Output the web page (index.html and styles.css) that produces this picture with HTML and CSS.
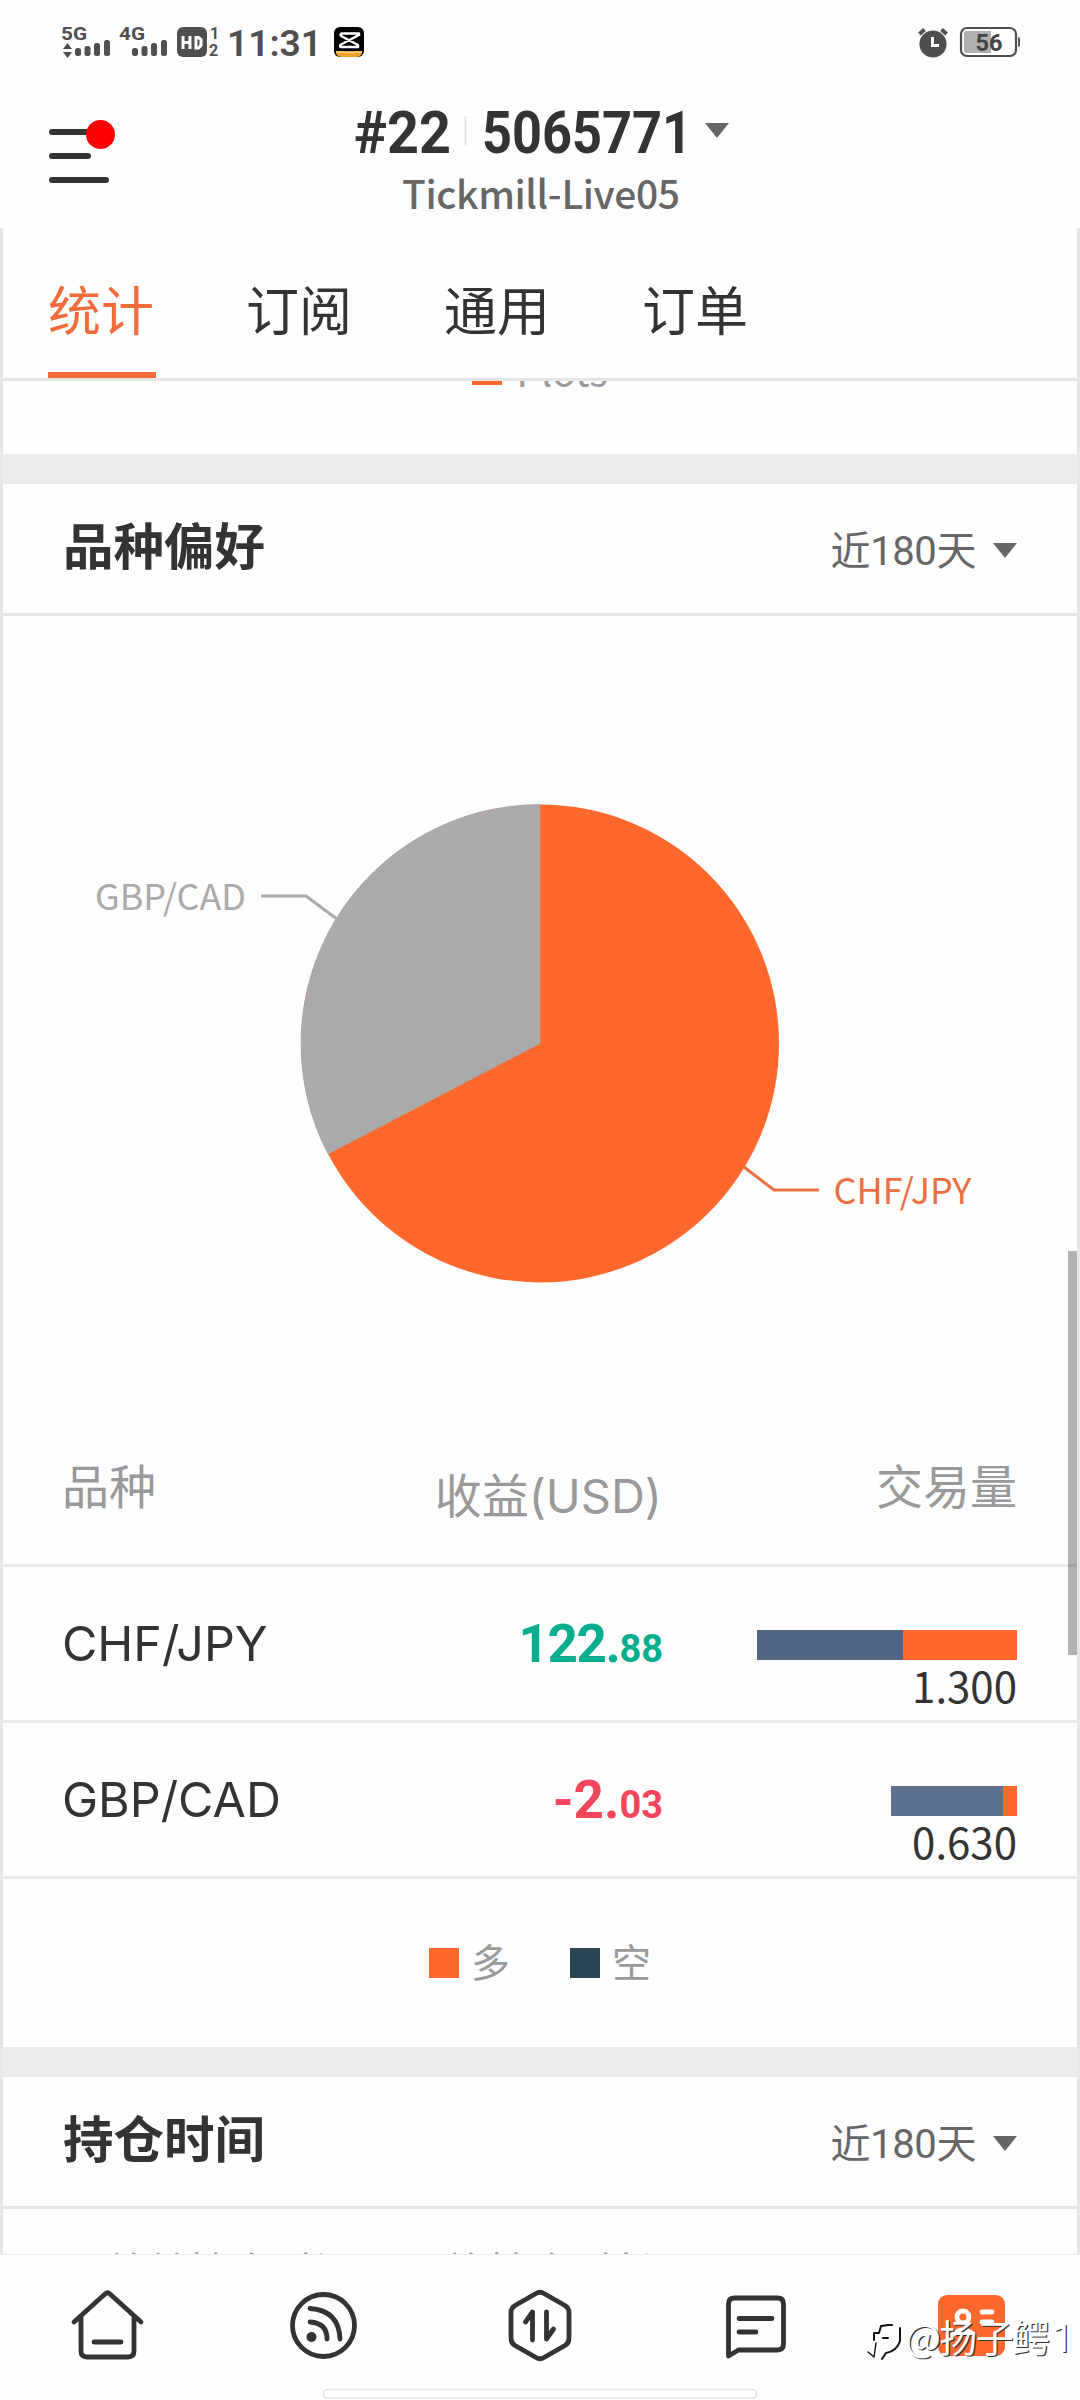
FILE: index.html
```html
<!DOCTYPE html>
<html lang="zh-CN">
<head>
<meta charset="utf-8">
<title>统计</title>
<link rel="stylesheet" href="styles.css">
</head>
<body>
<div class="app">
  <header class="top">
    <svg class="top-art" width="1080" height="228" viewBox="0 0 1080 228">
      <g fill="#4f4f4f">
        <text class="sig" x="61" y="40" textLength="26" lengthAdjust="spacingAndGlyphs">5G</text>
        <text class="sig" x="119" y="40" textLength="26" lengthAdjust="spacingAndGlyphs">4G</text>
        <path d="M63 49l4.500-6 4.500 6zM63 52h9l-4.500 6z"/>
        <rect x="75" y="48" width="6" height="8" rx="2.500"/><rect x="84.500" y="46" width="6" height="10" rx="2.500"/><rect x="94" y="43" width="6" height="13" rx="2.500"/><rect x="104" y="40" width="6" height="16" rx="2.500"/>
        <rect x="132" y="48" width="6" height="8" rx="2.500"/><rect x="141.500" y="46" width="6" height="10" rx="2.500"/><rect x="151" y="43" width="6" height="13" rx="2.500"/><rect x="161" y="40" width="6" height="16" rx="2.500"/>
        <rect x="177" y="27" width="30" height="30" rx="6"/>
        <text class="mini" x="210" y="38.500">1</text><text class="mini" x="209" y="56">2</text>
        <text class="clock" x="227" y="55.500" textLength="95" lengthAdjust="spacingAndGlyphs">11:31</text>
      </g>
      <path d="M183 36v13M190 36v13M183 42.500h7M196 37.500h2.500l2.500 2v6l-2.500 2.500h-2.500z" fill="none" stroke="#fff" stroke-width="3"/>
      <rect x="334" y="27" width="30" height="30" rx="6" fill="#000"/>
      <path d="M336 51h26v2q-1 4-6 4h-14q-5 0-6-4z" fill="#f0a32c"/>
      <path d="M336 51.500l3 1 3-1 3 1.500 4-1 4 1 3-1.500 3 1 3-1" fill="none" stroke="#ffe0a0" stroke-width="1"/>
      <path d="M359 36v-2.500h-17q-3 1 0 3l16 8.500v2h-17q-2-.5 0-2.500l17-9" fill="none" stroke="#fff" stroke-width="2.500" stroke-linejoin="round"/>
      <circle cx="933" cy="44" r="13.600" fill="#4f4f4f"/>
      <path d="M919.500 34l5-4.500M946.500 34l-5-4.500" stroke="#4f4f4f" stroke-width="4"/>
      <path d="M932.500 37v8.500h6.500" fill="none" stroke="#fff" stroke-width="3"/>
      <rect x="961" y="28" width="55" height="28" rx="6" fill="#fff" stroke="#4f4f4f" stroke-width="2.200"/>
      <path d="M966 31h25v22h-25q-2 0-2-2v-18q0-2 2-2z" fill="#b0b0b0"/>
      <path d="M1018 37q2 0 2 2v6q0 2-2 2z" fill="#4f4f4f"/>
      <text class="batt" x="975.500" y="50.500" fill="#444" textLength="27" lengthAdjust="spacingAndGlyphs">56</text>
      <path d="M52 132h40M52 156h36M52 180h54" stroke="#333" stroke-width="6" stroke-linecap="round"/>
      <circle cx="100.500" cy="134.500" r="14.500" fill="#f00"/>
      <text class="acct" x="354" y="153" textLength="97" lengthAdjust="spacingAndGlyphs">#22</text>
      <path d="M465.500 116v29" stroke="#e4e4e4" stroke-width="2"/>
      <text class="acct" x="482" y="153" textLength="210" lengthAdjust="spacingAndGlyphs">5065771</text>
      <path d="M705 123h24l-12 15z" fill="#666"/>
      <text class="server" x="402" y="209" textLength="278">Tickmill-Live05</text>
    </svg>
  </header>

  <main class="body">
    <nav class="tabs">
      <span class="tab on">统计</span><span class="tab">订阅</span><span class="tab">通用</span><span class="tab">订单</span>
    </nav>
    <section class="prev">
      <div class="prev-legend"><i class="sw long"></i><span>Plots</span></div>
    </section>

    <section class="card">
      <div class="head"><h2>品种偏好</h2><span class="range">近180天<i class="caret"></i></span></div>
      <svg class="pie" width="1074" height="768" viewBox="3 616 1074 768">
        <circle cx="540" cy="1043.500" r="239" fill="#ff682d"/>
        <path d="M540 1043.500V804.500A239 239 0 0 0 328 1153.900z" fill="#aaa" stroke="#aaa" stroke-width=".6"/>
        <path d="M261 896h45l31 23" fill="none" stroke="#aaa" stroke-width="3"/>
        <path d="M744 1167l30 23h45" fill="none" stroke="#ec6f42" stroke-width="3"/>
        <text class="plabel" x="95" y="909.500" fill="#aaa" textLength="151" lengthAdjust="spacingAndGlyphs">GBP/CAD</text>
        <text class="plabel" x="833.500" y="1204" fill="#ec6f42" textLength="138" lengthAdjust="spacingAndGlyphs">CHF/JPY</text>
      </svg>
      <div class="row cols"><span>品种</span><span class="mid">收益(USD)</span><span class="end">交易量</span></div>
      <div class="row">
        <span class="sym">CHF/JPY</span>
        <span class="pl up">122.<small>88</small></span>
        <span class="vol"><span class="bar"><i class="short" style="width:146px"></i><i class="long" style="width:114px"></i></span>1.300</span>
      </div>
      <div class="row">
        <span class="sym">GBP/CAD</span>
        <span class="pl down">-2.<small>03</small></span>
        <span class="vol"><span class="bar"><i class="short alt" style="width:112px"></i><i class="long" style="width:14px"></i></span>0.630</span>
      </div>
      <div class="legend"><i class="sw long"></i><span>多</span><i class="sw dark"></i><span>空</span></div>
    </section>

    <section class="card">
      <div class="head"><h2>持仓时间</h2><span class="range">近180天<i class="caret"></i></span></div>
      <div class="clip"><span>总单持仓时间</span><span>平均持仓时长</span></div>
    </section>
    <div class="scroll"></div>
  </main>

  <footer class="nav">
    <svg width="1080" height="145" viewBox="0 2255 1080 145" fill="none" stroke="#333" stroke-width="4.800" stroke-linecap="round" stroke-linejoin="round">
      <path d="M74 2322l31-28q2.500-2.500 5 0l31 28M81 2317v34q0 6 6 6h41q6 0 6-6v-34M94 2342h27"/>
      <circle cx="323.500" cy="2325.500" r="31"/>
      <circle cx="311.500" cy="2337" r="5" fill="#333" stroke="none"/>
      <path d="M310 2322q17 1 17 17M310 2308.500q29 2 30 30.500"/>
      <path d="M536 2293.500q4-2.500 8 0l21 12q4 2.500 4 7v26q0 4.500-4 7l-21 12q-4 2.500-8 0l-21-12q-4-2.500-4-7v-26q0-4.500 4-7z"/>
      <path d="M525.500 2322l7-10v28M546.500 2312v27l7-10"/>
      <path d="M728.500 2356v-52q0-6 6-6h43q6 0 6 6v40q0 6-6 6h-39zM739 2318.500h33M739 2332h17"/>
      <rect x="938" y="2295" width="67" height="61" rx="9" fill="#ff682d" stroke="none"/>
      <g stroke="#fff"><circle cx="963" cy="2317" r="6"/><path d="M982 2312h10M982 2322h10M952 2335q11-10 22 0"/></g>
      <rect x="323.500" y="2389.500" width="433" height="8.500" rx="4" fill="#fff" stroke="#e5e5e5" stroke-width="1.600"/>
      <g class="mark">
        <path d="M874 2340v-7h5l2-7 7-1h4M883 2338h5M900 2328v13q-3 10-14 12l-4 6" stroke="#111" stroke-width="2"/>
        <path d="M868 2352l6 5 2-14" stroke="#111" stroke-width="1.400"/>
        <text x="905" y="2351.500" textLength="145">@扬子鳄</text><text class="digit" x="1052" y="2352">1</text>
      </g>
    </svg>
  </footer>
</div>
</body>
</html>
```
FILE: styles.css
```css
* { box-sizing: border-box; }
body { margin: 0; background: #fff; color: #333; font-family: "Noto Sans CJK SC", sans-serif; }
i { font-style: normal; }
.app { width: 1080px; height: 2400px; overflow: hidden; display: flex; flex-direction: column; background: #fefefe; }
.top { height: 228px; flex: none; }
.top-art, .pie, .nav svg { display: block; }
.sig { font: 700 19px Roboto, sans-serif; }
.mini { font: 700 16px Roboto, sans-serif; }
.clock { font: 600 37px Roboto, sans-serif; }
.batt { font: 700 23px Roboto, sans-serif; }
.acct { font: 700 59px Roboto, sans-serif; fill: #333; }
.server { font: 500 39px "Noto Sans CJK SC", sans-serif; fill: #666; }
.plabel { font: 400 35.500px "Noto Sans CJK SC", sans-serif; }

.body { position: relative; height: 2026px; flex: none; overflow: hidden; border: solid #e6e6e6; border-width: 0 3px; }
.tabs { height: 153px; padding-left: 45px; display: flex; gap: 90px; border-bottom: 3px solid #e5e5e5; font-size: 53px; line-height: 160px; }
.tab { width: 108px; height: 150px; }
.tab.on { color: #f26c3a; border-bottom: 6px solid #f26c3a; }
.prev { height: 73px; overflow: hidden; }
.prev-legend { margin-top: -26px; height: 30px; display: flex; justify-content: center; align-items: center; gap: 14px; font-size: 39px; line-height: 30px; color: #999; }
.sw { width: 30px; height: 30px; }
.long { background: #ff682d; }
.short { background: #526583; }
.short.alt { background: #5e7190; }
.dark { background: #2a4555; }

.card { border-top: 30px solid #eaebec; }
.head { height: 132px; padding: 0 60px; display: flex; justify-content: space-between; border-bottom: 3px solid #e5e5e5; }
h2 { margin: 0; font-size: 50.500px; font-weight: 700; line-height: 119px; }
.range { display: flex; align-items: center; padding-top: 6px; font: 400 40px/132px Roboto, "Noto Sans CJK SC", sans-serif; letter-spacing: -.4px; color: #666; }
.caret { margin: -3px 0 0 17px; border: solid transparent; border-width: 15px 12px 0; border-top-color: #666; }
.row { height: 156px; padding: 0 60px 0 59px; display: grid; grid-template-columns: 300px 1fr 354px; border-bottom: 3px solid #e9e9e9; }
.row.cols { height: 183px; font: 400 47px/205px Inter, "Noto Sans CJK SC", sans-serif; color: #999; }
.row.cols .mid { line-height: 223px; padding-right: 1px; }
.mid, .pl, .end { text-align: right; }
.sym { font: 400 48.400px/153px Inter, sans-serif; }
.pl { font: 700 53px/155px Roboto, sans-serif; letter-spacing: -1.400px; }
.pl.down { letter-spacing: 0; }
.pl small { font-size: 38px; letter-spacing: 0; }
.up { color: #06ad8f; }
.down { color: #f5455a; }
.vol { padding-top: 63px; display: flex; flex-direction: column; align-items: flex-end; font-size: 42px; line-height: 49px; }
.bar { display: flex; height: 30px; }
.legend { height: 168px; display: flex; justify-content: center; align-items: center; font-size: 39px; color: #999; }
.legend span { margin: -7px 60px 0 12px; }
.legend span:last-child { margin-right: 0; }
.clip { height: 45px; overflow: hidden; padding: 39px 0 0 101px; display: flex; gap: 48px; font-size: 42px; line-height: 44px; color: #999; }
.scroll { position: absolute; right: -3px; top: 1023px; width: 12px; height: 404px; background: rgba(0, 0, 0, .3); }
.nav { height: 146px; border-top: 1px solid #eee; background: #fefefe; }
.mark text { font: 400 38px "Noto Sans CJK SC", sans-serif; fill: #fff; stroke: none; text-shadow: 1.200px 1.200px 0 #333; }
.mark .digit { font: 400 38px Roboto, sans-serif; }
```
